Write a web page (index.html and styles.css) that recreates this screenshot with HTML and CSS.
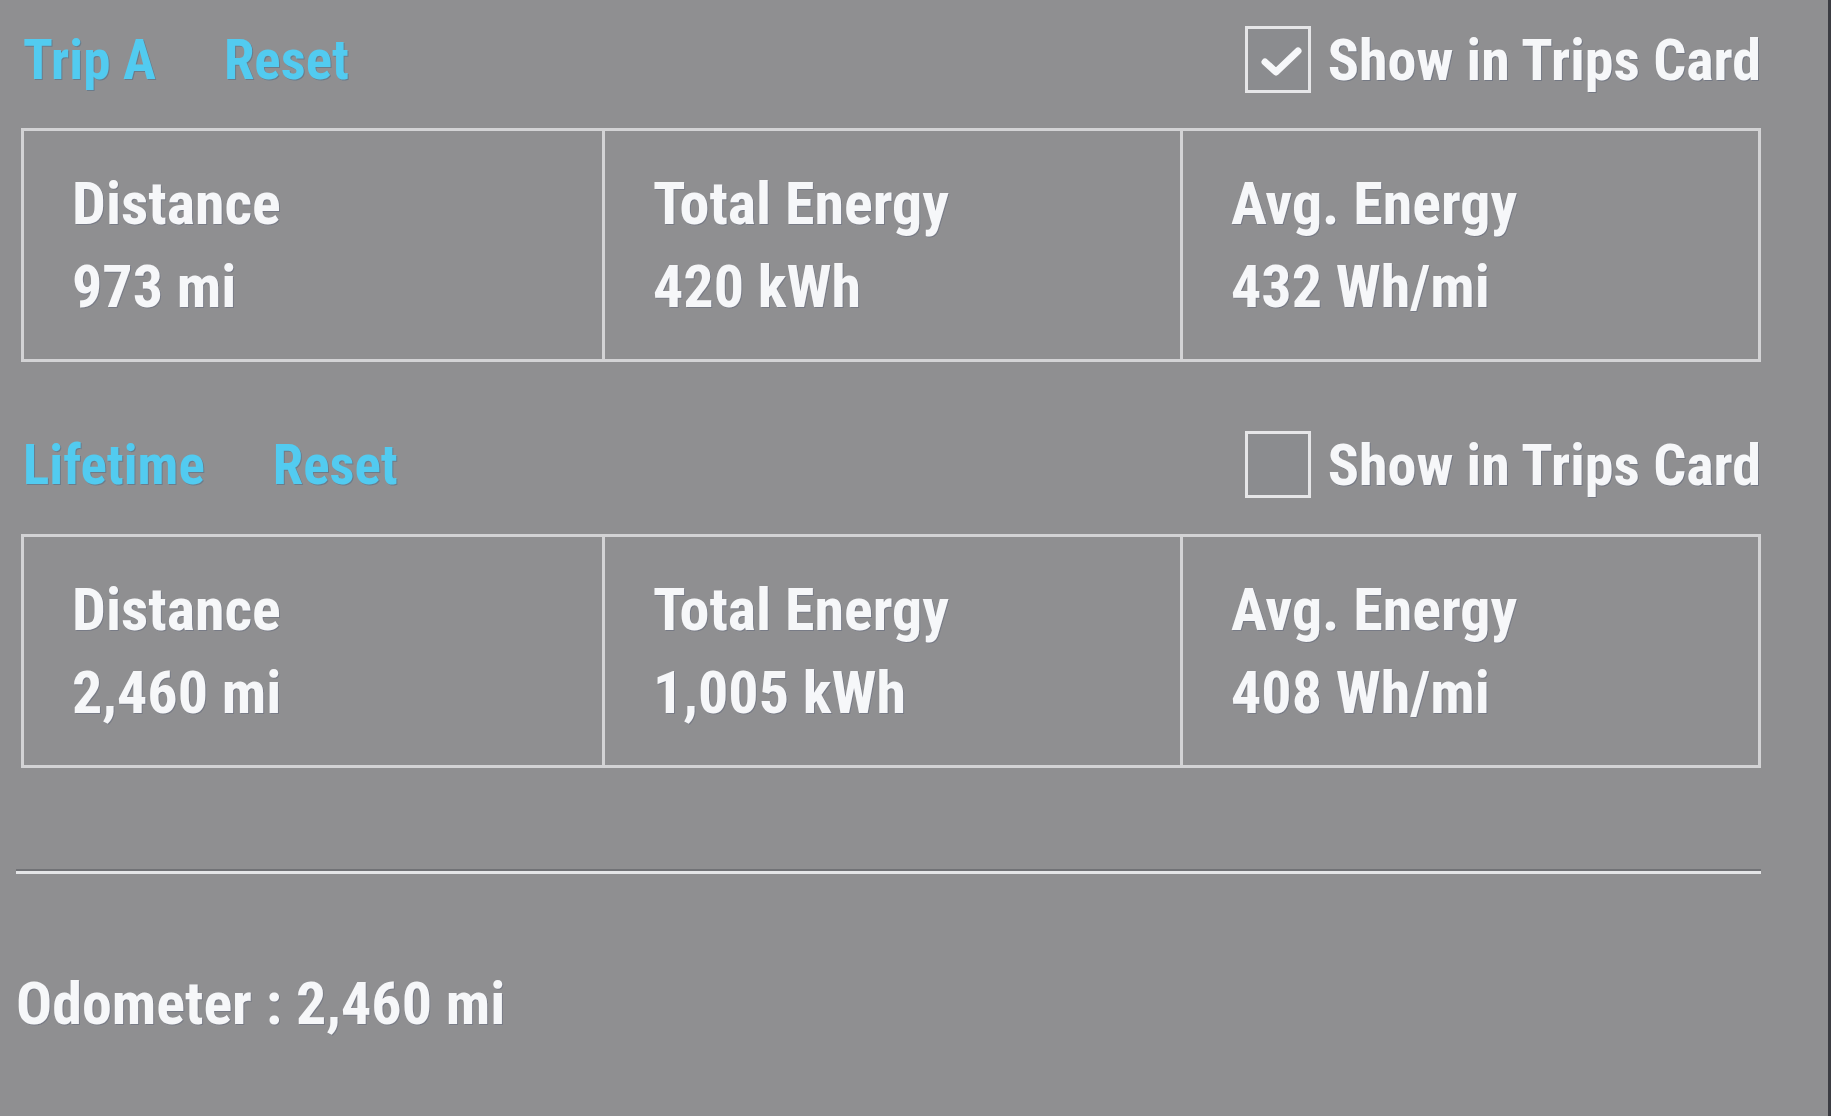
FILE: index.html
```html
<!DOCTYPE html>
<html lang="en">
<head>
  <meta charset="UTF-8">
  <meta name="viewport" content="width=device-width, initial-scale=1.0">
  <title>Trips</title>
  <link rel="stylesheet" href="styles.css">
</head>
<body>
  <div class="screen">

    <!-- Trip A -->
    <div class="trip-head first">
      <div class="links">
        <span class="link">Trip A</span>
        <span class="link">Reset</span>
      </div>
      <label class="show">
        <span class="box checked">
          <svg viewBox="0 0 60 60" width="60" height="60"><path d="M17 32 L28 42 L50 21" /></svg>
        </span>
        Show in Trips Card
      </label>
    </div>
    <div class="stats">
      <div class="cell">
        <div>Distance</div>
        <div>973 mi</div>
      </div>
      <div class="cell">
        <div>Total Energy</div>
        <div>420 kWh</div>
      </div>
      <div class="cell">
        <div>Avg. Energy</div>
        <div>432 Wh/mi</div>
      </div>
    </div>

    <!-- Lifetime -->
    <div class="trip-head">
      <div class="links">
        <span class="link">Lifetime</span>
        <span class="link">Reset</span>
      </div>
      <label class="show">
        <span class="box"></span>
        Show in Trips Card
      </label>
    </div>
    <div class="stats">
      <div class="cell">
        <div>Distance</div>
        <div>2,460 mi</div>
      </div>
      <div class="cell">
        <div>Total Energy</div>
        <div>1,005 kWh</div>
      </div>
      <div class="cell">
        <div>Avg. Energy</div>
        <div>408 Wh/mi</div>
      </div>
    </div>

    <hr class="divider">

    <p class="odometer">Odometer : 2,460 mi</p>
  </div>
</body>
</html>
```

FILE: styles.css
```css
body {
  margin: 0;
  padding: 0;
  background-color: #8f8f91;
  font-family: "Liberation Sans Narrow", "Arial Narrow", "Roboto Condensed", sans-serif;
  font-weight: bold;
  color: #f6f7f9;
}
.screen {
  box-sizing: border-box;
  width: 1831px;
  height: 1116px;
  padding: 0 67px 0 20px;
  background-color: #8f8f91;
  border-right: 3px solid #3b3c42;
  overflow: hidden;
}
.trip-head {
  display: flex;
  align-items: center;
  justify-content: space-between;
  height: 67px;
  margin-top: 69px;
  margin-bottom: 36px;
}
.trip-head.first {
  margin-top: 0;
  padding-top: 26px;
  margin-bottom: 35px;
}
.links {
  display: flex;
  gap: 68px;
  padding-left: 3px;
}
.link {
  color: #52cbf0;
  font-size: 55px;
  text-shadow: 1px 1px 0 rgba(40, 90, 130, 0.35);
}
.show {
  display: flex;
  align-items: center;
  gap: 17px;
  font-size: 58px;
  text-shadow: 1px 1px 0 rgba(70, 80, 110, 0.35);
}
.box {
  box-sizing: border-box;
  width: 66px;
  height: 67px;
  border: 3px solid #e6e6e8;
  background-color: #8b8c8f;
  display: flex;
  align-items: center;
  justify-content: center;
}
.box svg path {
  fill: none;
  stroke: #f6f7f9;
  stroke-width: 7;
  stroke-linecap: round;
  stroke-linejoin: round;
}
.stats {
  display: grid;
  grid-template-columns: 1fr 1fr 1fr;
  border: 3px solid #d3d3d5;
  margin-left: 1px;
}
.cell {
  padding: 31px 0 31px 48px;
  font-size: 60px;
  line-height: 83px;
  text-shadow: 1px 1px 0 rgba(70, 80, 110, 0.3);
}
.cell + .cell {
  border-left: 3px solid #d3d3d5;
}
.divider {
  margin: 101px 0 0 -4px;
  height: 0;
  border: none;
  border-top: 2px solid #717276;
  border-bottom: 3px solid #e4e5e7;
}
.odometer {
  margin: 95px 0 0 -4px;
  font-size: 60px;
  line-height: 69px;
  text-shadow: 1px 1px 0 rgba(70, 80, 110, 0.3);
}
```
